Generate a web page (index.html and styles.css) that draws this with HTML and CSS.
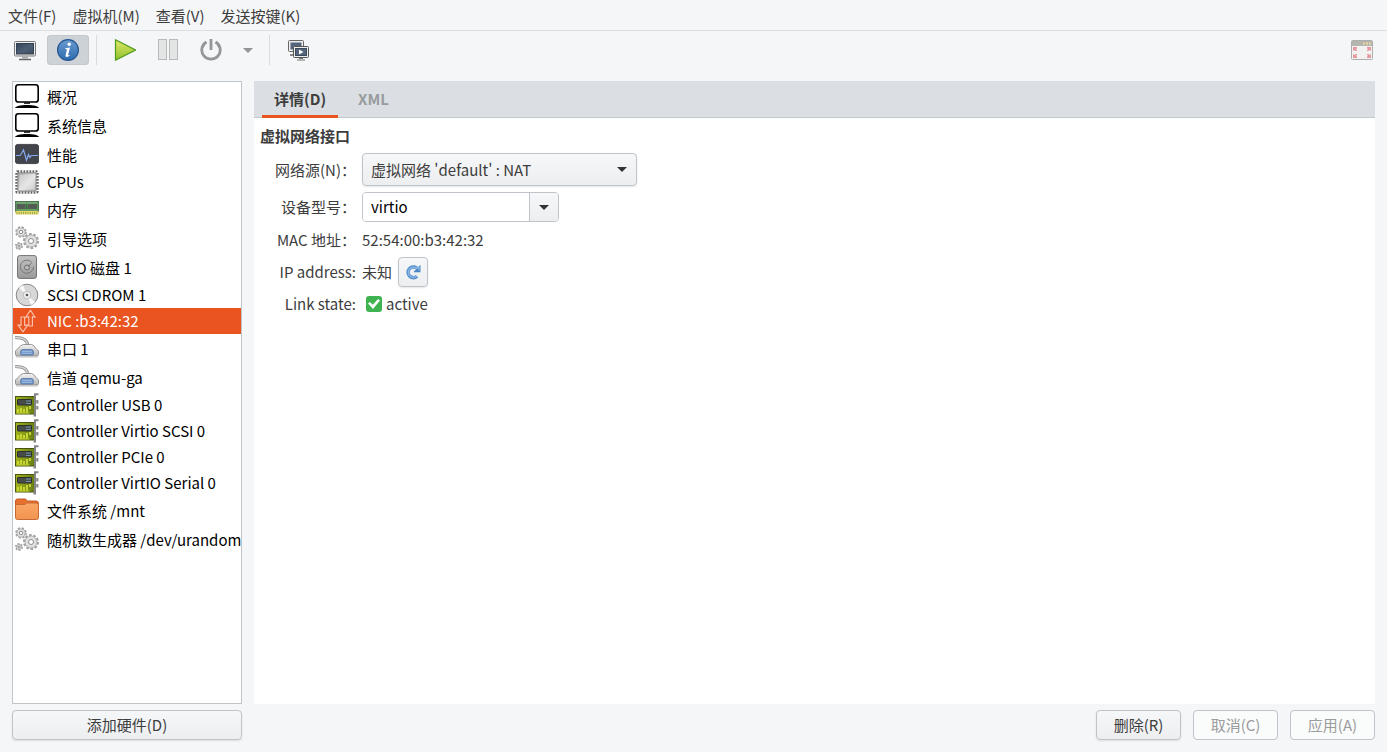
FILE: index.html
```html
<!DOCTYPE html>
<html lang="zh-CN">
<head>
<meta charset="utf-8">
<meta name="viewport" content="width=device-width, initial-scale=1">
<title>虚拟机</title>
<link rel="stylesheet" href="styles.css">
</head>
<body>
<svg class="defs" aria-hidden="true">
  <defs>
    <linearGradient id="g-screen" x1="0" y1="0" x2="1" y2="1"><stop offset="0" stop-color="#34465a"/><stop offset=".55" stop-color="#4e6076"/><stop offset="1" stop-color="#3b4b5e"/></linearGradient>
    <linearGradient id="g-blue" x1="0" y1="0" x2="0" y2="1"><stop offset="0" stop-color="#6a9bd0"/><stop offset="1" stop-color="#2e6bb0"/></linearGradient>
    <linearGradient id="g-play" x1="0" y1="0" x2="0" y2="1"><stop offset="0" stop-color="#dfe96a"/><stop offset="1" stop-color="#8fc02c"/></linearGradient>
    <linearGradient id="g-metal" x1="0" y1="0" x2="1" y2="1"><stop offset="0" stop-color="#a9a9a9"/><stop offset=".55" stop-color="#e9e9e9"/><stop offset="1" stop-color="#b9b9b9"/></linearGradient>
    <linearGradient id="g-disk" x1="0" y1="0" x2="0" y2="1"><stop offset="0" stop-color="#c4c4c4"/><stop offset="1" stop-color="#9a9a9a"/></linearGradient>
    <linearGradient id="g-folder" x1="0" y1="0" x2="0" y2="1"><stop offset="0" stop-color="#f9a666"/><stop offset="1" stop-color="#f39350"/></linearGradient>
    <linearGradient id="g-plug" x1="0" y1="0" x2="0" y2="1"><stop offset="0" stop-color="#f4f4f4"/><stop offset="1" stop-color="#b4b4b4"/></linearGradient>
    <linearGradient id="g-card" x1="0" y1="0" x2="1" y2="0"><stop offset="0" stop-color="#a3b41c"/><stop offset="1" stop-color="#667c14"/></linearGradient>
  </defs>
  <symbol id="i-display" viewBox="0 0 24 24">
    <rect x=".8" y=".8" width="22.400" height="17.200" rx="2.600" fill="#fff" stroke="#000" stroke-width="1.600"/>
    <path d="M9 18.500h6v1.300H9z"/><path d="M0 24c1-2 5-3 12-3s11 1 12 3z"/>
  </symbol>
  <symbol id="i-perf" viewBox="0 0 24 24">
    <rect x=".4" y="2.400" width="23.200" height="19.200" rx="2.400" fill="#42454c" stroke="#2d2f33" stroke-width=".8"/>
    <path d="M1 13.500h4l1.500-2 2-3.700 3 10.400 2-5.700 1.500 3 1.200-2H23" fill="none" stroke="#86a8ee" stroke-width="1.200"/>
  </symbol>
  <symbol id="i-cpu" viewBox="0 0 24 24">
    <rect x="1.500" y="1.500" width="21" height="21" rx="1" fill="none" stroke="#666" stroke-width="2.400" stroke-dasharray="1.700 1.300"/>
    <rect x="2.900" y="2.900" width="18.200" height="18.200" rx="1" fill="url(#g-metal)" stroke="#777" stroke-width=".9"/>
    <rect x="5" y="5" width="14" height="14" fill="#e3e3e3" opacity=".45"/>
  </symbol>
  <symbol id="i-ram" viewBox="0 0 24 24">
    <rect x=".4" y="4.400" width="23.200" height="10.400" fill="#559157" stroke="#41643f" stroke-width=".8"/>
    <path d="M2 7h8.500v5H2zM12.800 7H22v5h-9.200z" fill="#555c55"/>
    <path d="M11.700 5v8" stroke="#2f6b37"/><path d="M1.500 6h21" stroke="#8ebb8a"/><path d="M1.500 13h21" stroke="#79ad74"/>
    <rect x=".5" y="14" width="23" height="3.500" fill="#f0dc68"/><path d="M1.500 16h21" stroke="#8ca552" stroke-width="2.400" stroke-dasharray="1 1.200"/>
  </symbol>
  <symbol id="i-gears" viewBox="0 0 24 24">
    <g fill="none" stroke="#a2a2a2">
      <circle cx="16" cy="15" r="6.700" stroke-width="2.600" stroke-dasharray="2.600 1.600"/>
      <circle cx="6" cy="6" r="4.700" stroke-width="2.200" stroke-dasharray="2.100 1.600"/>
      <circle cx="4" cy="20" r="3" stroke-width="2" stroke-dasharray="1.800 1.300"/>
    </g>
    <g stroke="#a6a6a6" stroke-width=".8" fill="#e0e0e0">
      <circle cx="16" cy="15" r="6"/><circle cx="6" cy="6" r="4.100"/><circle cx="4" cy="20" r="2.600"/>
    </g>
    <g stroke="#858585" stroke-width=".9" fill="#fff"><circle cx="16" cy="15" r="2.500"/><circle cx="6" cy="6" r="1.700"/><circle cx="4" cy="20" r="1"/></g>
  </symbol>
  <symbol id="i-disk" viewBox="0 0 24 24">
    <rect x="2.500" y=".6" width="19" height="22.800" rx="2.200" fill="url(#g-disk)" stroke="#737373"/>
    <path d="M18.500 11.800a6.600 6.600 0 1 1-2-4.800" fill="none" stroke="#777"/>
    <circle cx="12" cy="12.500" r="2.500" fill="#bbb" stroke="#6d6d6d"/><path d="m13 11.500 3.800-3.700" stroke="#6d6d6d"/>
  </symbol>
  <symbol id="i-cd" viewBox="0 0 24 24">
    <circle cx="12" cy="12" r="10.800" fill="#d7d7d7" stroke="#888"/>
    <path d="M12 12 4 5a11 11 0 0 1 4-3zM12 12l8 7a11 11 0 0 1-4 3z" fill="#f8f8f8"/>
    <circle cx="12" cy="12" r="3.800" fill="#eee" stroke="#aaa" stroke-width=".7"/><circle cx="12" cy="12" r="1.300" fill="#555"/>
  </symbol>
  <symbol id="i-nic" viewBox="0 0 24 24">
    <g fill="none" stroke="#f9bfa8" stroke-width="1.200" stroke-linejoin="round">
      <path d="m15.500 1.200 4.700 7.300-2.800-.8V17h-3.600V7.700l-3.300.8z"/><path d="m8 22.800-5-7 3 .7V8h3.600v8.500l3.200-.7z"/>
    </g>
  </symbol>
  <symbol id="i-serial" viewBox="0 0 24 24">
    <path d="M0 1.500c9 0 12 2.500 13 8" fill="none" stroke="#8a8a8a" stroke-width="3"/><path d="M0 1.500c9 0 12 2.500 13 8" fill="none" stroke="#d8d8d8" stroke-width="1.500"/>
    <path d="M8.500 8.500h8q2.500.5 4 3.500l3 3v3.500q0 1.500-2 1.500h-19Q.5 20 .5 18.500V15l3-3q2-3 5-3.500z" fill="url(#g-plug)" stroke="#8a8a8a" stroke-width=".9"/>
    <path d="M7.500 13.500h9q1.500 0 1.700 1.500l.3 2.500q0 1.500-1.500 1.500H7q-1.500 0-1.500-1.500L5.800 15q.2-1.500 1.700-1.500z" fill="#6e97ce" stroke="#54739e" stroke-width=".8"/>
    <path d="M7.500 15.300h9M7.500 17.300h9" stroke="#e3ecf7" stroke-width=".9" stroke-dasharray="1 1"/><path d="M1 21h22" stroke="#c4c4c4"/>
  </symbol>
  <symbol id="i-card" viewBox="0 0 24 24">
    <rect x=".5" y="3.500" width="19" height="17.500" fill="url(#g-card)" stroke="#46560e"/>
    <rect x="2.500" y="6.500" width="14" height="5.500" rx=".5" fill="#474c48" stroke="#2c302c"/><path d="M11 8h5M11 10.500h5" stroke="#6f90ad" stroke-width="1.200"/>
    <path d="M3 19.500V16M6 19.500V15M9 19.500V16M12 19.500V14M15 16v-3" stroke="#dcea3c" stroke-width="1.500"/><path d="M1.500 20h13" stroke="#c9d632"/>
    <path d="M23.500 1.200H20v21.300h-1.500" fill="none" stroke="#858585" stroke-width="2"/><path d="M22.300 7v3.500M22.300 13v3.500" stroke="#8b8b8b" stroke-width="2.200"/>
  </symbol>
  <symbol id="i-folder" viewBox="0 0 24 24">
    <path d="M.5 18V3q0-2 2-2H10q1 0 1.500 1l.8 1H21q2.500 0 2.500 2.500V18z" fill="#e8702e" stroke="#c45a21"/>
    <path d="M.5 6.500H9q1 0 2-1l.8-.5H21q2.500 0 2.500 2.500v12q0 2-2 2h-19q-2 0-2-2z" fill="url(#g-folder)" stroke="#c66a35"/>
  </symbol>
</svg>

<div class="window">
  <nav class="menubar" aria-label="菜单">
    <button class="menu">文件(F)</button><button class="menu">虚拟机(M)</button><button class="menu">查看(V)</button><button class="menu">发送按键(K)</button>
  </nav>

  <header class="toolbar">
    <button class="tool" aria-label="控制台"><svg class="tool-icon" viewBox="0 0 22 22"><rect x=".5" y="2.500" width="21" height="14.500" rx="1" fill="#eee" stroke="#777"/><rect x="2.500" y="4.500" width="17" height="10.500" fill="url(#g-screen)" stroke="#33404f"/><path d="M8 17.500h6v2H8z" fill="#aaa"/><path d="M5 20.500h12" stroke="#666" stroke-width="1.500"/></svg></button>
    <button class="tool tool-on" aria-label="详情" aria-pressed="true"><svg class="tool-icon" viewBox="0 0 22 22"><circle cx="11" cy="11" r="10.400" fill="url(#g-blue)" stroke="#225590" stroke-width="1.200"/><circle cx="12.200" cy="5.300" r="1.700" fill="#fff"/><path d="M8.300 9.200 13 8.500l-1.900 7.400q0 .8 1.700-.2l-.3 1Q8 19.500 8.600 16l1.300-5.300q0-.8-1.600-.6z" fill="#fff"/></svg></button>
    <span class="sep"></span>
    <button class="tool" aria-label="运行"><svg class="tool-icon" viewBox="0 0 22 22"><path d="M1.500.8v20.400L21.500 11z" fill="url(#g-play)" stroke="#4f9a1c" stroke-width="1.200"/></svg></button>
    <button class="tool" aria-label="暂停"><svg class="tool-icon" viewBox="0 0 22 22"><g fill="#e3e4e4" stroke="#b9baba"><rect x="1.500" y=".5" width="8" height="20"/><rect x="12.500" y=".5" width="8" height="20"/></g></svg></button>
    <button class="tool" aria-label="关机"><svg class="tool-icon" viewBox="0 0 22 22"><path d="M6.500 3A9.200 9.200 0 1 0 15.500 3M11 0v11" fill="none" stroke="#949698" stroke-width="2.800"/></svg></button>
    <button class="tool tool-drop" aria-label="关机选项"><svg class="arrow arrow-dim" viewBox="0 0 10 5"><path d="M0 0h10L5 5z"/></svg></button>
    <span class="sep"></span>
    <button class="tool" aria-label="快照"><svg class="tool-icon" viewBox="0 0 22 22"><rect x="1.500" y="1.500" width="15" height="11" rx="1" fill="#eee" stroke="#666"/><rect x="3.500" y="3.500" width="11" height="7" fill="#54667b"/><path d="M3 16h4" stroke="#666" stroke-width="1.500"/><rect x="6.500" y="7.500" width="15" height="11" rx="1" fill="#eee" stroke="#555"/><rect x="8.500" y="9.500" width="11" height="7" fill="#53657a" stroke="#3c4a59"/><path d="m12 10.500 4.500 2.500-4.500 2.500z" fill="#fff"/><path d="M10 21h8M12 19.500h4" stroke="#777"/></svg></button>
    <button class="tool tool-end" aria-label="全屏"><svg class="tool-icon" viewBox="0 0 22 22"><rect x=".5" y="1.500" width="21" height="19" rx="1" fill="#f2f2f2" stroke="#adadad"/><path d="M1 2h20v5H1z" fill="#b5b5b0"/><path d="M12 4.500h2M15 4.500h2M18 4.500h2" stroke="#ecd699" stroke-width="2"/><path d="M2 8h4v1.500L4.800 10 6 11v1H4.500L3.500 11 2 12zM20 8h-4v1.500l1.200.5L16 11v1h1.500l1-1 1.500 1zM2 19h4v-1.500L4.800 17 6 16v-1H4.500l-1 1L2 15zM20 19h-4v-1.500l1.200-.5-1.200-1v-1h1.500l1 1 1.500-1z" fill="#e4979c"/></svg></button>
  </header>

  <main class="body">
    <section class="sidebar">
      <ul class="hw-list">
        <li><button class="hw"><svg class="hw-icon"><use href="#i-display"/></svg>概况</button></li>
        <li><button class="hw"><svg class="hw-icon"><use href="#i-display"/></svg>系统信息</button></li>
        <li><button class="hw"><svg class="hw-icon"><use href="#i-perf"/></svg>性能</button></li>
        <li><button class="hw hw-latin"><svg class="hw-icon"><use href="#i-cpu"/></svg>CPUs</button></li>
        <li><button class="hw"><svg class="hw-icon"><use href="#i-ram"/></svg>内存</button></li>
        <li><button class="hw"><svg class="hw-icon"><use href="#i-gears"/></svg>引导选项</button></li>
        <li><button class="hw"><svg class="hw-icon"><use href="#i-disk"/></svg>VirtIO 磁盘 1</button></li>
        <li><button class="hw hw-latin"><svg class="hw-icon"><use href="#i-cd"/></svg>SCSI CDROM 1</button></li>
        <li><button class="hw hw-latin hw-selected" aria-current="true"><svg class="hw-icon"><use href="#i-nic"/></svg>NIC :b3:42:32</button></li>
        <li><button class="hw"><svg class="hw-icon"><use href="#i-serial"/></svg>串口 1</button></li>
        <li><button class="hw"><svg class="hw-icon"><use href="#i-serial"/></svg>信道 qemu-ga</button></li>
        <li><button class="hw hw-latin"><svg class="hw-icon"><use href="#i-card"/></svg>Controller USB 0</button></li>
        <li><button class="hw hw-latin"><svg class="hw-icon"><use href="#i-card"/></svg>Controller Virtio SCSI 0</button></li>
        <li><button class="hw hw-latin"><svg class="hw-icon"><use href="#i-card"/></svg>Controller PCIe 0</button></li>
        <li><button class="hw hw-latin"><svg class="hw-icon"><use href="#i-card"/></svg>Controller VirtIO Serial 0</button></li>
        <li><button class="hw"><svg class="hw-icon"><use href="#i-folder"/></svg>文件系统 /mnt</button></li>
        <li><button class="hw"><svg class="hw-icon"><use href="#i-gears"/></svg>随机数生成器 /dev/urandom</button></li>
      </ul>
      <button class="btn">添加硬件(D)</button>
    </section>

    <section class="details">
      <div class="notebook">
        <div class="tabs" role="tablist">
          <button class="tab tab-active" role="tab" aria-selected="true">详情(D)</button>
          <button class="tab" role="tab" aria-selected="false">XML</button>
        </div>
        <div class="page" role="tabpanel">
          <h1 class="title">虚拟网络接口</h1>
          <div class="form">
            <label class="label" for="source">网络源(N)：</label>
            <div class="select-wrap">
              <select class="select" id="source"><option>虚拟网络 'default' : NAT</option></select>
              <svg class="arrow select-arrow" viewBox="0 0 10 5"><path d="M0 0h10L5 5z"/></svg>
            </div>
            <label class="label" for="model">设备型号：</label>
            <div class="combo">
              <input class="entry" id="model" type="text" value="virtio">
              <button class="combo-btn" aria-label="选择型号"><svg class="arrow" viewBox="0 0 10 5"><path d="M0 0h10L5 5z"/></svg></button>
            </div>
            <span class="label">MAC 地址：</span>
            <span class="value">52:54:00:b3:42:32</span>
            <span class="label">IP address:</span>
            <div class="ip">
              <span>未知</span>
              <button class="refresh" aria-label="刷新"><svg class="refresh-icon" viewBox="0 0 16 16"><path d="M12 12.200A5.300 5.300 0 1 1 11.500 4" fill="none" stroke="#5a93cf" stroke-width="3.600"/><path d="M15.500.8v7.400H8.200z" fill="#4a85c4"/><path d="M11.500 12A4.900 4.900 0 1 1 11 4.200l3-1.200v3.500" fill="none" stroke="#8bb6e4" stroke-width="1.400"/></svg></button>
            </div>
            <span class="label">Link state:</span>
            <label class="check"><input class="check-box" type="checkbox" checked>active</label>
          </div>
        </div>
      </div>
      <div class="actions">
        <button class="btn">删除(R)</button>
        <button class="btn" disabled>取消(C)</button>
        <button class="btn" disabled>应用(A)</button>
      </div>
    </section>
  </main>
</div>
</body>
</html>
```
FILE: styles.css
```css
* { box-sizing: border-box; }

body {
  margin: 0;
  background: #f5f6f7;
  color: #3d3d3d;
  font: 15px/20px "Noto Sans CJK SC", "Noto Sans", sans-serif;
}

button, input, select {
  margin: 0;
  padding: 0;
  border: 0;
  background: none;
  color: inherit;
  font: inherit;
}

.defs { position: absolute; width: 0; height: 0; }

.window { display: flex; flex-direction: column; min-height: 100vh; }

.menubar { display: flex; gap: 16px; padding: 6px 8px 4px; border-bottom: 1px solid #dcdfe3; }

.toolbar { display: flex; align-items: center; gap: 1px; padding: 4px 4px 16px; }
.tool { display: flex; align-items: center; justify-content: center; width: 42px; height: 30px; border-radius: 4px; }
.tool-on { background: #cdd2d6; box-shadow: inset 0 0 0 1px #c3c8cd; }
.tool-drop { width: 29px; }
.tool-end { margin-left: auto; }
.tool-icon { width: 22px; height: 22px; }
.sep { width: 1px; height: 30px; margin: 0 6px; background: #d9dcdf; }

.arrow { width: 10px; height: 5px; fill: #333; }
.arrow-dim { fill: #929595; }

.body { display: flex; flex: 1; gap: 12px; padding: 0 12px 12px; }

.sidebar { display: flex; flex-direction: column; gap: 6px; width: 230px; }
.hw-list { flex: 1; margin: 0; padding: 0; list-style: none; background: #fff; border: 1px solid #c0c5ca; }
.hw { display: flex; align-items: center; gap: 8px; width: 100%; height: 29px; padding: 0 2px; color: #000; text-align: left; white-space: nowrap; }
.hw-icon { flex: none; width: 24px; height: 24px; margin-bottom: 1px; }
.hw-latin { height: 26px; }
.hw-latin .hw-icon { margin-bottom: 0; }
.hw-selected { background: #e95420; color: #fff; }

.btn {
  min-width: 85px;
  height: 30px;
  border: 1px solid #bfc4ca;
  border-radius: 4px;
  background: linear-gradient(#f6f7f8, #edeef0);
  box-shadow: 0 1px 2px #0000001a;
}
.btn:disabled { background: #fafbfb; color: #9a9c9d; box-shadow: none; }

.details { display: flex; flex: 1; flex-direction: column; gap: 6px; min-width: 0; }
.notebook { display: flex; flex: 1; flex-direction: column; background: #fff; }
.tabs { display: flex; gap: 8px; height: 37px; padding: 0 8px; background: #dbdfe3; border-bottom: 1px solid #c3c8cc; }
.tab { height: 37px; padding: 1px 12px 0; border-bottom: 3px solid transparent; color: #989b9e; font-weight: 700; }
.tab-active { border-color: #e95420; color: #3d3d3d; }
.page { padding: 8px 6px; }
.title { margin: 0 0 7px; font-size: 15px; line-height: 20px; }

.form { display: grid; grid-template-columns: 96px 1fr; gap: 6px; align-items: center; }
.label { text-align: right; white-space: nowrap; }
.value { line-height: 23px; }

.select-wrap { display: grid; align-items: center; width: 275px; }
.select-wrap > * { grid-area: 1 / 1; }
.select {
  appearance: none;
  width: 100%;
  height: 33px;
  padding: 0 30px 0 8px;
  border: 1px solid #bfc4ca;
  border-radius: 4px;
  background: linear-gradient(#f6f7f8, #edeef0);
  box-shadow: 0 1px 2px #0000001a;
}
.select-arrow { justify-self: end; margin-right: 10px; pointer-events: none; }

.combo { display: flex; width: 197px; height: 30px; border: 1px solid #bfc4ca; border-radius: 4px; overflow: hidden; }
.entry { flex: 1; min-width: 0; padding: 0 8px; background: #fff; color: #000; outline: 0; }
.combo-btn { display: flex; align-items: center; justify-content: center; width: 29px; border-left: 1px solid #bfc4ca; background: linear-gradient(#f6f7f8, #edeef0); }

.ip { display: flex; align-items: center; gap: 6px; }
.refresh {
  display: flex;
  align-items: center;
  justify-content: center;
  width: 30px;
  height: 30px;
  border: 1px solid #bfc4ca;
  border-radius: 4px;
  background: linear-gradient(#f6f7f8, #edeef0);
  box-shadow: 0 1px 2px #0000001a;
}
.refresh-icon { width: 16px; height: 16px; }

.check { display: flex; align-items: center; gap: 4px; padding-left: 4px; line-height: 22px; }
.check-box { appearance: none; display: grid; place-items: center; width: 16px; height: 16px; border-radius: 3px; background: #3eb34f; }
.check-box:checked::before {
  content: "";
  width: 12px;
  height: 10px;
  background: #fff;
  clip-path: polygon(0 45%, 16% 30%, 40% 58%, 84% 0, 100% 15%, 42% 100%);
}

.actions { display: flex; justify-content: flex-end; gap: 12px; }
```
